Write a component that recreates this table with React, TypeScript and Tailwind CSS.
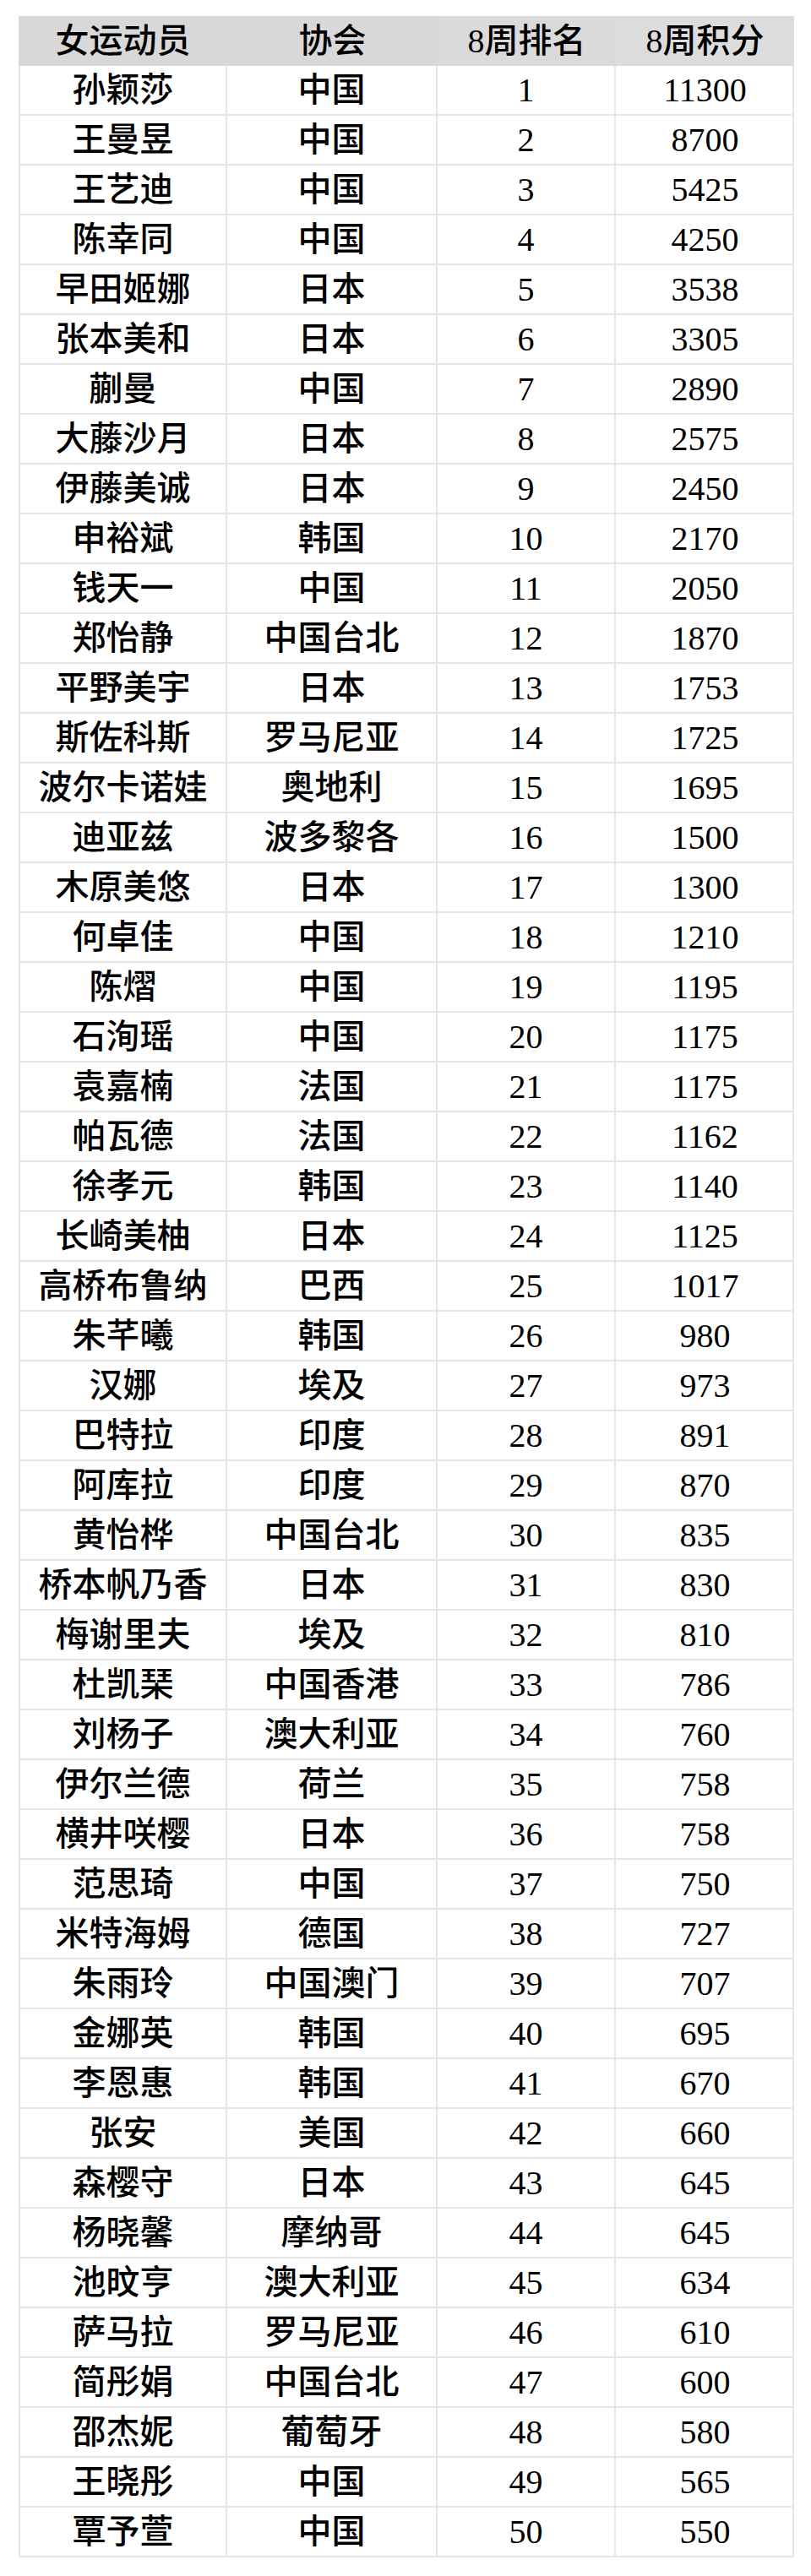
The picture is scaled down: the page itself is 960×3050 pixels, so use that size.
const ROWS: [string, string, number, number][] = [
  ["孙颖莎", "中国", 1, 11300],
  ["王曼昱", "中国", 2, 8700],
  ["王艺迪", "中国", 3, 5425],
  ["陈幸同", "中国", 4, 4250],
  ["早田姬娜", "日本", 5, 3538],
  ["张本美和", "日本", 6, 3305],
  ["蒯曼", "中国", 7, 2890],
  ["大藤沙月", "日本", 8, 2575],
  ["伊藤美诚", "日本", 9, 2450],
  ["申裕斌", "韩国", 10, 2170],
  ["钱天一", "中国", 11, 2050],
  ["郑怡静", "中国台北", 12, 1870],
  ["平野美宇", "日本", 13, 1753],
  ["斯佐科斯", "罗马尼亚", 14, 1725],
  ["波尔卡诺娃", "奥地利", 15, 1695],
  ["迪亚兹", "波多黎各", 16, 1500],
  ["木原美悠", "日本", 17, 1300],
  ["何卓佳", "中国", 18, 1210],
  ["陈熠", "中国", 19, 1195],
  ["石洵瑶", "中国", 20, 1175],
  ["袁嘉楠", "法国", 21, 1175],
  ["帕瓦德", "法国", 22, 1162],
  ["徐孝元", "韩国", 23, 1140],
  ["长崎美柚", "日本", 24, 1125],
  ["高桥布鲁纳", "巴西", 25, 1017],
  ["朱芊曦", "韩国", 26, 980],
  ["汉娜", "埃及", 27, 973],
  ["巴特拉", "印度", 28, 891],
  ["阿库拉", "印度", 29, 870],
  ["黄怡桦", "中国台北", 30, 835],
  ["桥本帆乃香", "日本", 31, 830],
  ["梅谢里夫", "埃及", 32, 810],
  ["杜凯琹", "中国香港", 33, 786],
  ["刘杨子", "澳大利亚", 34, 760],
  ["伊尔兰德", "荷兰", 35, 758],
  ["横井咲樱", "日本", 36, 758],
  ["范思琦", "中国", 37, 750],
  ["米特海姆", "德国", 38, 727],
  ["朱雨玲", "中国澳门", 39, 707],
  ["金娜英", "韩国", 40, 695],
  ["李恩惠", "韩国", 41, 670],
  ["张安", "美国", 42, 660],
  ["森樱守", "日本", 43, 645],
  ["杨晓馨", "摩纳哥", 44, 645],
  ["池旼亨", "澳大利亚", 45, 634],
  ["萨马拉", "罗马尼亚", 46, 610],
  ["简彤娟", "中国台北", 47, 600],
  ["邵杰妮", "葡萄牙", 48, 580],
  ["王晓彤", "中国", 49, 565],
  ["覃予萱", "中国", 50, 550],
];

const FONT = "font-['Liberation_Serif','Noto_Sans_CJK_SC',serif]";

function Cell({ children, last }: { children: React.ReactNode; last?: boolean }) {
  return (
    <div
      className={`flex h-[59px] items-center justify-center border-b-2 border-[#e6e6e6] ${
        last ? "" : "border-r-2"
      }`}
    >
      {children}
    </div>
  );
}

export default function App() {
  return (
    <div
      className={`min-h-[3050px] bg-white pl-[22px] pt-[19px] text-[40px] font-medium leading-none text-black ${FONT}`}
    >
      <div className="w-[918px] border-r-2 border-[#e6e6e6]">
        {/* Header */}
        <div className="grid h-[59px] grid-cols-[247px_249px_211px_211px] bg-[#d8d8d8]">
          <div className="flex items-center justify-center">女运动员</div>
          <div className="flex items-center justify-center">协会</div>
          <div className="flex items-center justify-center bg-[#dadada]">8周排名</div>
          <div className="flex items-center justify-center bg-[#dcdcdc]">8周积分</div>
        </div>

        {/* Rows */}
        <div className="border-l-2 border-[#e6e6e6]">
          {ROWS.map(([name, assoc, rank, points]) => (
            <div key={rank} className="grid grid-cols-[245px_249px_211px_211px]">
              <Cell>{name}</Cell>
              <Cell>{assoc}</Cell>
              <Cell>{rank}</Cell>
              <Cell last>{points}</Cell>
            </div>
          ))}
        </div>
      </div>
    </div>
  );
}
